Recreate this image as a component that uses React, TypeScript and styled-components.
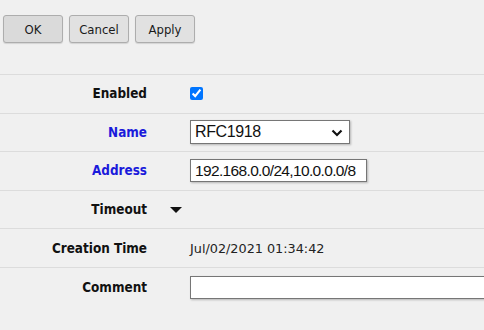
import React from "react";
import styled, { createGlobalStyle } from "styled-components";

const GlobalStyle = createGlobalStyle`
  html, body {
    margin: 0;
    padding: 0;
    background: #f0f0f0;
  }
  body {
    font-family: "DejaVu Sans Condensed", "DejaVu Sans", Tahoma, sans-serif;
  }
`;

const Page = styled.div`
  width: 484px;
  height: 330px;
  overflow: hidden;
  background: #f0f0f0;
`;

const Toolbar = styled.div`
  display: flex;
  align-items: flex-start;
  gap: 6px;
  padding: 15px 3px 0;
  height: 75px;
  box-sizing: border-box;
  border-bottom: 1px solid #dcdcdc;
`;

const Button = styled.button<{ $pressed?: boolean }>`
  width: 60px;
  height: 28px;
  border: 1px solid #adadad;
  border-radius: 3px;
  background: ${(p) => (p.$pressed ? "#dadada" : "#e1e1e1")};
  box-shadow: 0 1px 1px rgba(0, 0, 0, 0.12);
  font-family: "DejaVu Sans Condensed", "DejaVu Sans", Tahoma, sans-serif;
  font-size: 13px;
  color: #1a1a1a;
  padding: 0;
  cursor: pointer;
`;

const Form = styled.div`
  display: flex;
  flex-direction: column;
`;

const Row = styled.div`
  display: grid;
  grid-template-columns: 147px 1fr;
  column-gap: 43px;
  align-items: center;
  height: 38.6px;
  box-sizing: border-box;
  border-bottom: 1px solid #dcdcdc;
  &:last-child {
    border-bottom: 0;
  }
`;

const Label = styled.div<{ $link?: boolean }>`
  text-align: right;
  font-weight: bold;
  font-size: 13.4px;
  color: ${(p) => (p.$link ? "#1a1adb" : "#111")};
  white-space: nowrap;
`;

const Value = styled.div`
  display: flex;
  align-items: center;
  font-family: "DejaVu Sans", Tahoma, sans-serif;
  font-size: 12.8px;
  color: #222;
  white-space: nowrap;
`;

const Check = styled.input`
  width: 13px;
  height: 13px;
  margin: 0;
  accent-color: #0075ff;
`;

const SelectBox = styled.div`
  position: relative;
  width: 160px;
  height: 24px;
  box-sizing: border-box;
  border: 1px solid #767676;
  background: #fff;
  box-shadow: 1px 1px 2px rgba(0, 0, 0, 0.25);
  display: flex;
  align-items: center;
  padding-left: 4px;
  font-family: "Liberation Sans", Arial, sans-serif;
  font-size: 16px;
  letter-spacing: -0.4px;
  color: #111;
`;

const Chevron = styled.svg`
  position: absolute;
  right: 6px;
  top: 8px;
`;

const TextInput = styled.input<{ $w?: string }>`
  width: ${(p) => p.$w || "177px"};
  height: 23px;
  box-sizing: border-box;
  border: 1px solid #767676;
  box-shadow: 1px 1px 2px rgba(0, 0, 0, 0.25);
  background: #fff;
  padding: 0 3px 0 4px;
  margin: 0;
  font-family: "Liberation Sans", Arial, sans-serif;
  font-size: 15.5px;
  letter-spacing: -0.65px;
  color: #111;
  outline: none;
`;

const Caret = styled.span`
  width: 0;
  height: 0;
  margin-left: -20px;
  border-left: 6px solid transparent;
  border-right: 6px solid transparent;
  border-top: 6px solid #111;
`;

const App = () => {
  return (
    <Page>
      <GlobalStyle />
      <Toolbar>
        <Button $pressed>OK</Button>
        <Button>Cancel</Button>
        <Button>Apply</Button>
      </Toolbar>
      <Form>
        <Row>
          <Label>Enabled</Label>
          <Value>
            <Check type="checkbox" defaultChecked />
          </Value>
        </Row>
        <Row>
          <Label $link>Name</Label>
          <Value>
            <SelectBox>
              RFC1918
              <Chevron width="12" height="8" viewBox="0 0 12 8">
                <path d="M1.5 1.5 L6 6 L10.5 1.5" fill="none" stroke="#111" strokeWidth="2.2" />
              </Chevron>
            </SelectBox>
          </Value>
        </Row>
        <Row>
          <Label $link>Address</Label>
          <Value>
            <TextInput defaultValue="192.168.0.0/24,10.0.0.0/8" />
          </Value>
        </Row>
        <Row>
          <Label>Timeout</Label>
          <Value>
            <Caret />
          </Value>
        </Row>
        <Row>
          <Label>Creation Time</Label>
          <Value>Jul/02/2021 01:34:42</Value>
        </Row>
        <Row>
          <Label>Comment</Label>
          <Value>
            <TextInput $w="310px" defaultValue="" />
          </Value>
        </Row>
      </Form>
    </Page>
  );
};

export default App;
